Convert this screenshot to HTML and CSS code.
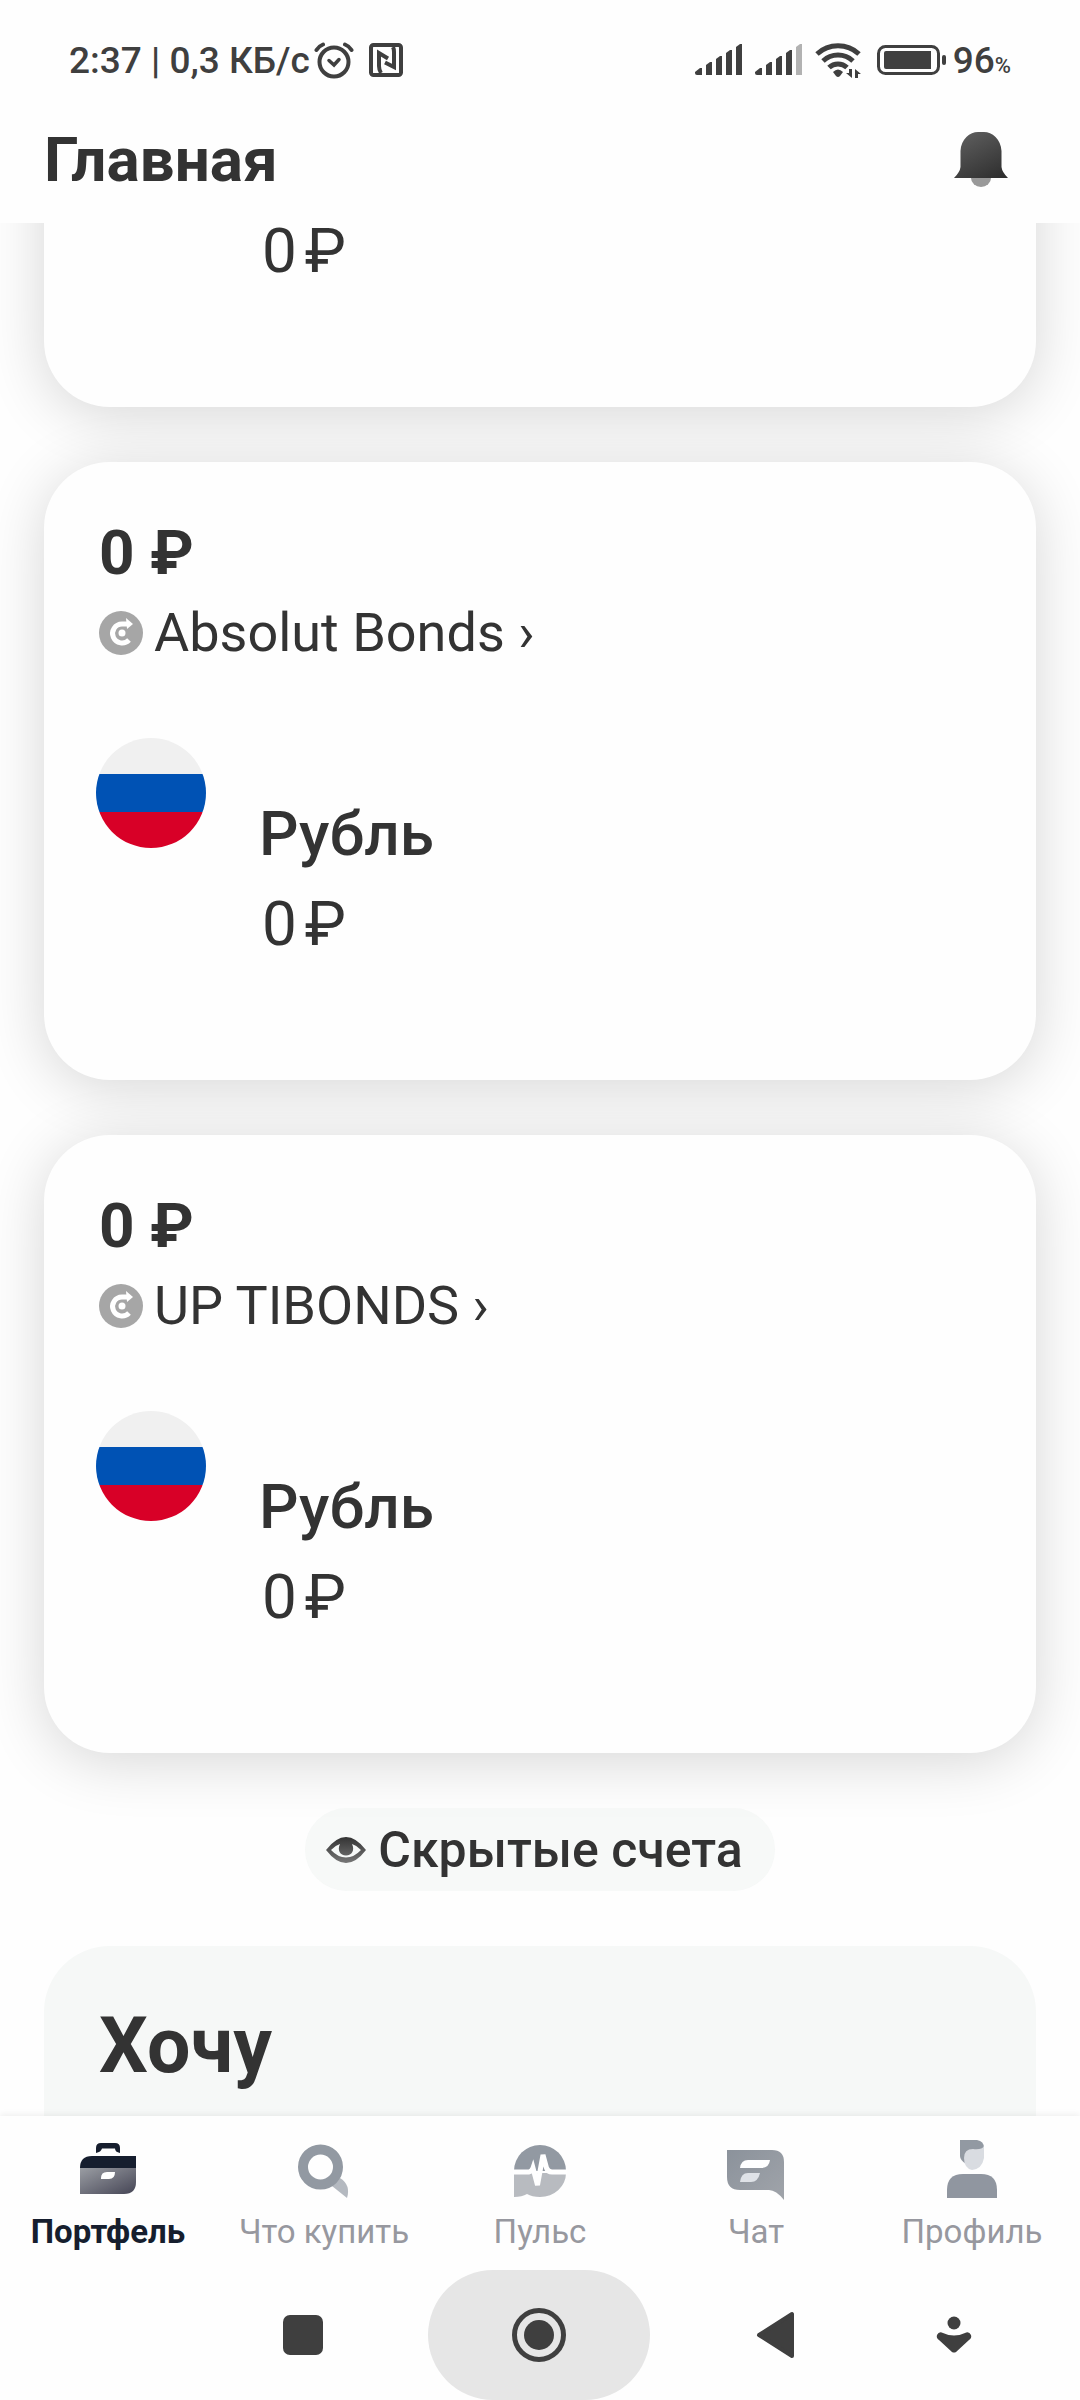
FILE: index.html
```html
<!DOCTYPE html>
<html lang="ru">
<head>
    <meta charset="UTF-8">
    <meta name="viewport" content="width=device-width, initial-scale=1.0">
    <title>Главная</title>
    <link rel="stylesheet" href="styles.css">
</head>

<body>
    <div class="app">
        <div class="status">
            <span class="status_text">2:37 | 0,3 КБ/с</span>
            <svg class="alarm" width="40" height="38" viewBox="0 0 40 38" fill="none" stroke="#3f3f3f" stroke-width="4" stroke-linecap="round">
                <circle cx="20" cy="21" r="14.5" />
                <path d="M2.5 9 Q5 5 9 3.5 M37.5 9 Q35 5 31 3.5" />
                <path d="M15 19.5 L20 24 L25 18.5" stroke-width="3.5" />
            </svg>
            <svg width="36" height="36" viewBox="0 0 36 36" fill="none" stroke="#3f3f3f" stroke-width="4">
                <rect x="3" y="3" width="30" height="30" rx="2.5" />
                <path d="M13 31 Q11 28 11 24 V11 L20 16.5" />
                <path d="M25 5 Q26 7 26 10 V25 L17 20.5" />
            </svg>
            <span class="spacer"></span>
            <svg class="signal" width="48" height="32" viewBox="0 0 48 32" fill="#3f3f3f">
                <path d="M0 28 L5 24 H7 V31 H2 Q0 31 0 29 Z" />
                <path d="M11 21 L15 18 H17 V31 H11 Z" />
                <path d="M21 15 L25 12 H27 V31 H21 Z" />
                <path d="M31 9 L35 6 H37 V31 H31 Z" />
                <path d="M41 3 L45 0 H47 V31 H41 Z" />
            </svg>
            <svg class="signal" width="48" height="32" viewBox="0 0 48 32" fill="#3f3f3f">
                <path d="M0 28 L5 24 H7 V31 H2 Q0 31 0 29 Z" />
                <path d="M11 21 L15 18 H17 V31 H11 Z" />
                <path d="M21 15 L25 12 H27 V31 H21 Z" />
                <path d="M31 9 L35 6 H37 V31 H31 Z" />
                <path d="M41 3 L45 0 H47 V31 H41 Z" fill="#b2b2b2" />
            </svg>
            <svg width="48" height="36" viewBox="0 0 48 36" fill="none" stroke="#3f3f3f" stroke-width="5">
                <path d="M2 12 A31 31 0 0 1 44 12" />
                <path d="M8 19 A22 22 0 0 1 38 19" />
                <path d="M14 25.5 A13 13 0 0 1 32 25.5" />
                <path d="M18 30 Q23 25 28 30 L25 34 Q23 36 21 34 Z" fill="#3f3f3f" stroke="none" />
                <path d="M37 27 V36 L31 31 H34 V27 Z M40 36 V27 L46 32 H43 V36 Z" fill="#3f3f3f" stroke="none" />
            </svg>
            <svg class="battery" width="70" height="32" viewBox="0 0 70 32" fill="#3f3f3f">
                <rect x="1.5" y="2.5" width="60" height="27" rx="7" fill="none" stroke="#3f3f3f" stroke-width="3" />
                <path d="M9 7 H54 V25 H9 Q7 25 7 23 V9 Q7 7 9 7 Z" />
                <rect x="65" y="11" width="4" height="10" rx="2" />
            </svg>
            <span class="status_text">96<small>%</small></span>
        </div>

        <div class="header">
            <h1>Главная</h1>
            <button aria-label="Уведомления">
                <svg width="56" height="56" viewBox="0 0 56 56">
                    <defs>
                        <linearGradient id="bell" x1="0.2" y1="0" x2="0.8" y2="1">
                            <stop offset="0" stop-color="#5e5e5e" />
                            <stop offset="1" stop-color="#303030" />
                        </linearGradient>
                    </defs>
                    <path d="M18 46 H38 A10 9 0 0 1 18 46 Z" fill="#999" />
                    <path d="M1 46 Q7 40 7.5 35 V19 C8 7 17 0 25 0 H31 C39 0 48 7 48.5 19 V35 Q49 40 55 46 Z" fill="url(#bell)" />
                </svg>
            </button>
        </div>

        <div class="content">
            <div class="card card_cut">
                <div class="sum">0<span>₽</span></div>
            </div>

            <div class="card">
                <h2>0 ₽</h2>
                <a href="#" class="account">
                    <svg width="44" height="44" viewBox="0 0 44 44">
                        <circle cx="22" cy="22" r="22" fill="#a6a6a6" />
                        <path d="M29 13 H23 A9.5 9.5 0 1 0 30 29" fill="none" stroke="#fff" stroke-width="5" stroke-linejoin="round" />
                        <path d="M27 7 L34 13 L28 18 Z" fill="#fff" />
                        <circle cx="23" cy="22" r="3.5" fill="#fff" />
                    </svg>
                    <span>Absolut Bonds ›</span>
                </a>
                <div class="currency">
                    <svg width="110" height="110" viewBox="0 0 110 110">
                        <clipPath id="round1"><circle cx="55" cy="55" r="55" /></clipPath>
                        <g clip-path="url(#round1)">
                            <rect width="110" height="36" fill="#f0f0f0" />
                            <rect y="36" width="110" height="38" fill="#0052b4" />
                            <rect y="74" width="110" height="36" fill="#d80027" />
                        </g>
                    </svg>
                    <div class="money">
                        <h3>Рубль</h3>
                        <div class="sum">0<span>₽</span></div>
                    </div>
                </div>
            </div>

            <div class="card">
                <h2>0 ₽</h2>
                <a href="#" class="account">
                    <svg width="44" height="44" viewBox="0 0 44 44">
                        <circle cx="22" cy="22" r="22" fill="#a6a6a6" />
                        <path d="M29 13 H23 A9.5 9.5 0 1 0 30 29" fill="none" stroke="#fff" stroke-width="5" stroke-linejoin="round" />
                        <path d="M27 7 L34 13 L28 18 Z" fill="#fff" />
                        <circle cx="23" cy="22" r="3.5" fill="#fff" />
                    </svg>
                    <span>UP TIBONDS ›</span>
                </a>
                <div class="currency">
                    <svg width="110" height="110" viewBox="0 0 110 110">
                        <clipPath id="round2"><circle cx="55" cy="55" r="55" /></clipPath>
                        <g clip-path="url(#round2)">
                            <rect width="110" height="36" fill="#f0f0f0" />
                            <rect y="36" width="110" height="38" fill="#0052b4" />
                            <rect y="74" width="110" height="36" fill="#d80027" />
                        </g>
                    </svg>
                    <div class="money">
                        <h3>Рубль</h3>
                        <div class="sum">0<span>₽</span></div>
                    </div>
                </div>
            </div>

            <button class="hidden_accounts">
                <svg width="40" height="26" viewBox="0 0 40 26">
                    <defs>
                        <linearGradient id="eye" x1="0" y1="0" x2="0" y2="1">
                            <stop offset="0" stop-color="#333" />
                            <stop offset="1" stop-color="#777" />
                        </linearGradient>
                    </defs>
                    <path fill="url(#eye)" fill-rule="evenodd" d="M0 13 Q10 0 20 0 Q30 0 40 13 Q30 26 20 26 Q10 26 0 13 Z M5 13 Q12 20.5 20 20.5 Q28 20.5 35 13 Q31 8.5 26 7 C29 13 26 18.5 20 18.5 C14 18.5 11 13 14 7 Q9 8.5 5 13 Z" />
                </svg>
                <span>Скрытые счета</span>
            </button>

            <div class="want">
                <h2>Хочу</h2>
            </div>
        </div>

        <nav class="tabs">
            <a href="#" class="tab active">
                <svg width="60" height="60" viewBox="0 0 60 60">
                    <defs>
                        <linearGradient id="bag" x1="0" y1="0" x2="1" y2="1">
                            <stop offset="0" stop-color="#9a9da3" />
                            <stop offset="1" stop-color="#454555" />
                        </linearGradient>
                    </defs>
                    <path d="M18 13 V8 Q18 3 23 3 H37 Q42 3 42 8 V13 Q37 12 37 8.5 H24 Q23 12 18 13 Z" fill="#161e2e" />
                    <path d="M2 28 H58 V42 Q58 54 46 54 H2 Z" fill="url(#bag)" />
                    <path d="M2 28 Q2 16 14 16 H58 V28 Z" fill="#161e2e" />
                    <path d="M23 39 V38 Q23 32 29 32 H37 Q37 39 31 39 Z" fill="#fff" />
                </svg>
                <span>Портфель</span>
            </a>
            <a href="#" class="tab">
                <svg width="60" height="60" viewBox="0 0 60 60">
                    <path d="M38 46 L46 38 Q57 45 53 58 Z" fill="#b4b9c0" />
                    <circle cx="26.5" cy="27" r="17.5" fill="none" stroke="#9299a2" stroke-width="10" />
                </svg>
                <span>Что купить</span>
            </a>
            <a href="#" class="tab">
                <svg width="60" height="60" viewBox="0 0 60 60">
                    <path d="M4 31 A26 26 0 0 1 56 31 Z" fill="#9299a2" />
                    <path d="M4 33 H56 A26 24 0 0 1 30 57 Q22 57 17 54 Q12 57 4 57 Z" fill="#b8bbc0" />
                    <path d="M3 32 H19 Q22 31 23 28 L27.5 45 L33 15 L36.5 28 Q38 32 42 32 H57" fill="none" stroke="#fff" stroke-width="5" />
                </svg>
                <span>Пульс</span>
            </a>
            <a href="#" class="tab">
                <svg width="60" height="60" viewBox="0 0 60 60">
                    <defs>
                        <linearGradient id="chat" x1="0" y1="0" x2="1" y2="1">
                            <stop offset="0" stop-color="#8b929b" />
                            <stop offset="1" stop-color="#a0a4aa" />
                        </linearGradient>
                    </defs>
                    <path d="M1 10 H46 Q58 10 58 22 V60 Q50 50 43 50 H14 Q1 50 1 37 Z" fill="url(#chat)" />
                    <path d="M14 28 Q15 20 22 20 H44 Q43 28 35 28 Z" fill="#fff" />
                    <path d="M14 42 Q15 33 22 33 H34 Q32 42 25 42 Z" fill="#dfe2e7" />
                </svg>
                <span>Чат</span>
            </a>
            <a href="#" class="tab">
                <svg width="60" height="60" viewBox="0 0 60 60">
                    <path d="M18 0 H35 Q42 1 42 8 L24 24 Q18 20 18 16 Z" fill="#9299a2" />
                    <path d="M22 18 Q22 9 31 9 Q40 10 42 6 V18 Q40 29 30 30 Q22 28 22 18 Z" fill="#d9dce1" />
                    <path d="M5 58 V50 Q5 34 21 34 H39 Q55 34 55 50 V58 Z" fill="#9096a0" />
                </svg>
                <span>Профиль</span>
            </a>
        </nav>

        <div class="system">
            <button aria-label="Недавние">
                <svg width="40" height="40" viewBox="0 0 40 40"><rect width="40" height="40" rx="7" fill="#3f3f3f" /></svg>
            </button>
            <button class="home" aria-label="Домой">
                <svg width="54" height="54" viewBox="0 0 54 54">
                    <circle cx="27" cy="27" r="24.5" fill="none" stroke="#3f3f3f" stroke-width="5" />
                    <circle cx="27" cy="27" r="15" fill="#3f3f3f" />
                </svg>
            </button>
            <button aria-label="Назад">
                <svg width="40" height="48" viewBox="0 0 40 48"><path d="M3 24 L36 3 V45 Z" fill="#3f3f3f" stroke="#3f3f3f" stroke-width="4" stroke-linejoin="round" /></svg>
            </button>
            <button aria-label="Скрыть панель">
                <svg width="36" height="40" viewBox="0 0 36 40" fill="#3f3f3f">
                    <circle cx="18" cy="8" r="6.5" />
                    <path d="M7 18 Q18 23 29 18 Q33 16 35 20 Q36 23 33 25 L20 37 Q18 38 16 37 L3 25 Q0 23 1 20 Q3 16 7 18 Z" />
                </svg>
            </button>
        </div>
    </div>
</body>
</html>
```
FILE: styles.css
```css
* {
    box-sizing: border-box;
}

body {
    margin: 0;
    background-color: #fefefe;
    color: #333;
    font-family: Roboto, "Noto Sans", sans-serif;
}

h1,
h2,
h3 {
    margin: 0;
}

button {
    border: none;
    background: none;
    padding: 0;
    font-family: inherit;
    color: inherit;
}

a {
    color: inherit;
    text-decoration: none;
}

svg {
    display: block;
    flex-shrink: 0;
}

.app {
    display: flex;
    flex-direction: column;
    height: 100vh;
    overflow: hidden;
}

.status {
    display: flex;
    align-items: center;
    height: 120px;
    padding: 0 69px;
    color: #3f3f3f;
}

.status_text {
    font-size: 37px;
    font-weight: 500;
}

.status_text small {
    font-size: 22px;
}

.alarm {
    margin: 0 14px 0 4px;
}

.spacer {
    flex: 1;
}

.signal {
    margin-right: 12px;
}

.battery {
    margin: 0 6px 0 14px;
}

.header {
    display: flex;
    align-items: center;
    justify-content: space-between;
    height: 103px;
    padding: 0 71px 24px 44px;
}

.header h1 {
    font-size: 62px;
    font-weight: 700;
}

.content {
    flex: 1;
    display: flex;
    flex-direction: column;
    gap: 55px;
    min-height: 0;
    padding: 0 44px;
    overflow: hidden;
}

.card {
    flex-shrink: 0;
    background-color: #fefefe;
    border-radius: 66px;
    padding: 55px 55px 106px;
    box-shadow: 0 8px 60px rgba(0, 0, 0, 0.16);
}

/* scrolled under the header */
.card_cut {
    margin-top: -200px;
    padding: 200px 55px 128px 218px;
}

.card h2 {
    font-size: 62px;
    line-height: 72px;
    font-weight: 700;
}

.account {
    display: flex;
    align-items: center;
    gap: 11px;
    font-size: 54px;
    line-height: 88px;
}

.currency {
    display: flex;
    gap: 53px;
    margin: 61px 0 0 -3px;
}

.money {
    padding-top: 56px;
}

.money h3 {
    font-size: 62px;
    line-height: 80px;
    font-weight: 500;
}

.sum {
    display: flex;
    gap: 8px;
    font-size: 62px;
    line-height: 56px;
}

.money .sum {
    padding-left: 3px;
    line-height: 100px;
}

.hidden_accounts {
    display: flex;
    flex-shrink: 0;
    align-items: center;
    align-self: center;
    gap: 12px;
    height: 83px;
    padding: 0 32px 0 21px;
    border-radius: 42px;
    background-color: rgba(239, 243, 241, 0.5);
    font-size: 50px;
    font-weight: 500;
}

.want {
    flex-shrink: 0;
    height: 400px;
    padding: 55px;
    border-radius: 66px;
    background-color: #f6f8f7;
}

.want h2 {
    font-size: 77px;
    line-height: 90px;
    font-weight: 700;
}

.tabs {
    display: grid;
    grid-template-columns: repeat(5, 1fr);
    height: 154px;
    padding-top: 24px;
    box-shadow: 0 -2px 6px rgba(0, 0, 0, 0.06);
    background-color: #fefefe;
}

.tab {
    display: flex;
    flex-direction: column;
    align-items: center;
    gap: 12px;
    font-size: 33px;
    line-height: 40px;
    color: #97989f;
}

.active {
    color: #161e2e;
    font-weight: 700;
}

.system {
    display: grid;
    grid-template-columns: 250px 222px 252px 104px;
    justify-content: end;
    height: 130px;
    padding-right: 74px;
    background-color: #fefefe;
}

.system button {
    display: flex;
    align-items: center;
    justify-content: center;
}

.system .home {
    border-radius: 65px;
    background-color: #e6e6e6;
}
```
